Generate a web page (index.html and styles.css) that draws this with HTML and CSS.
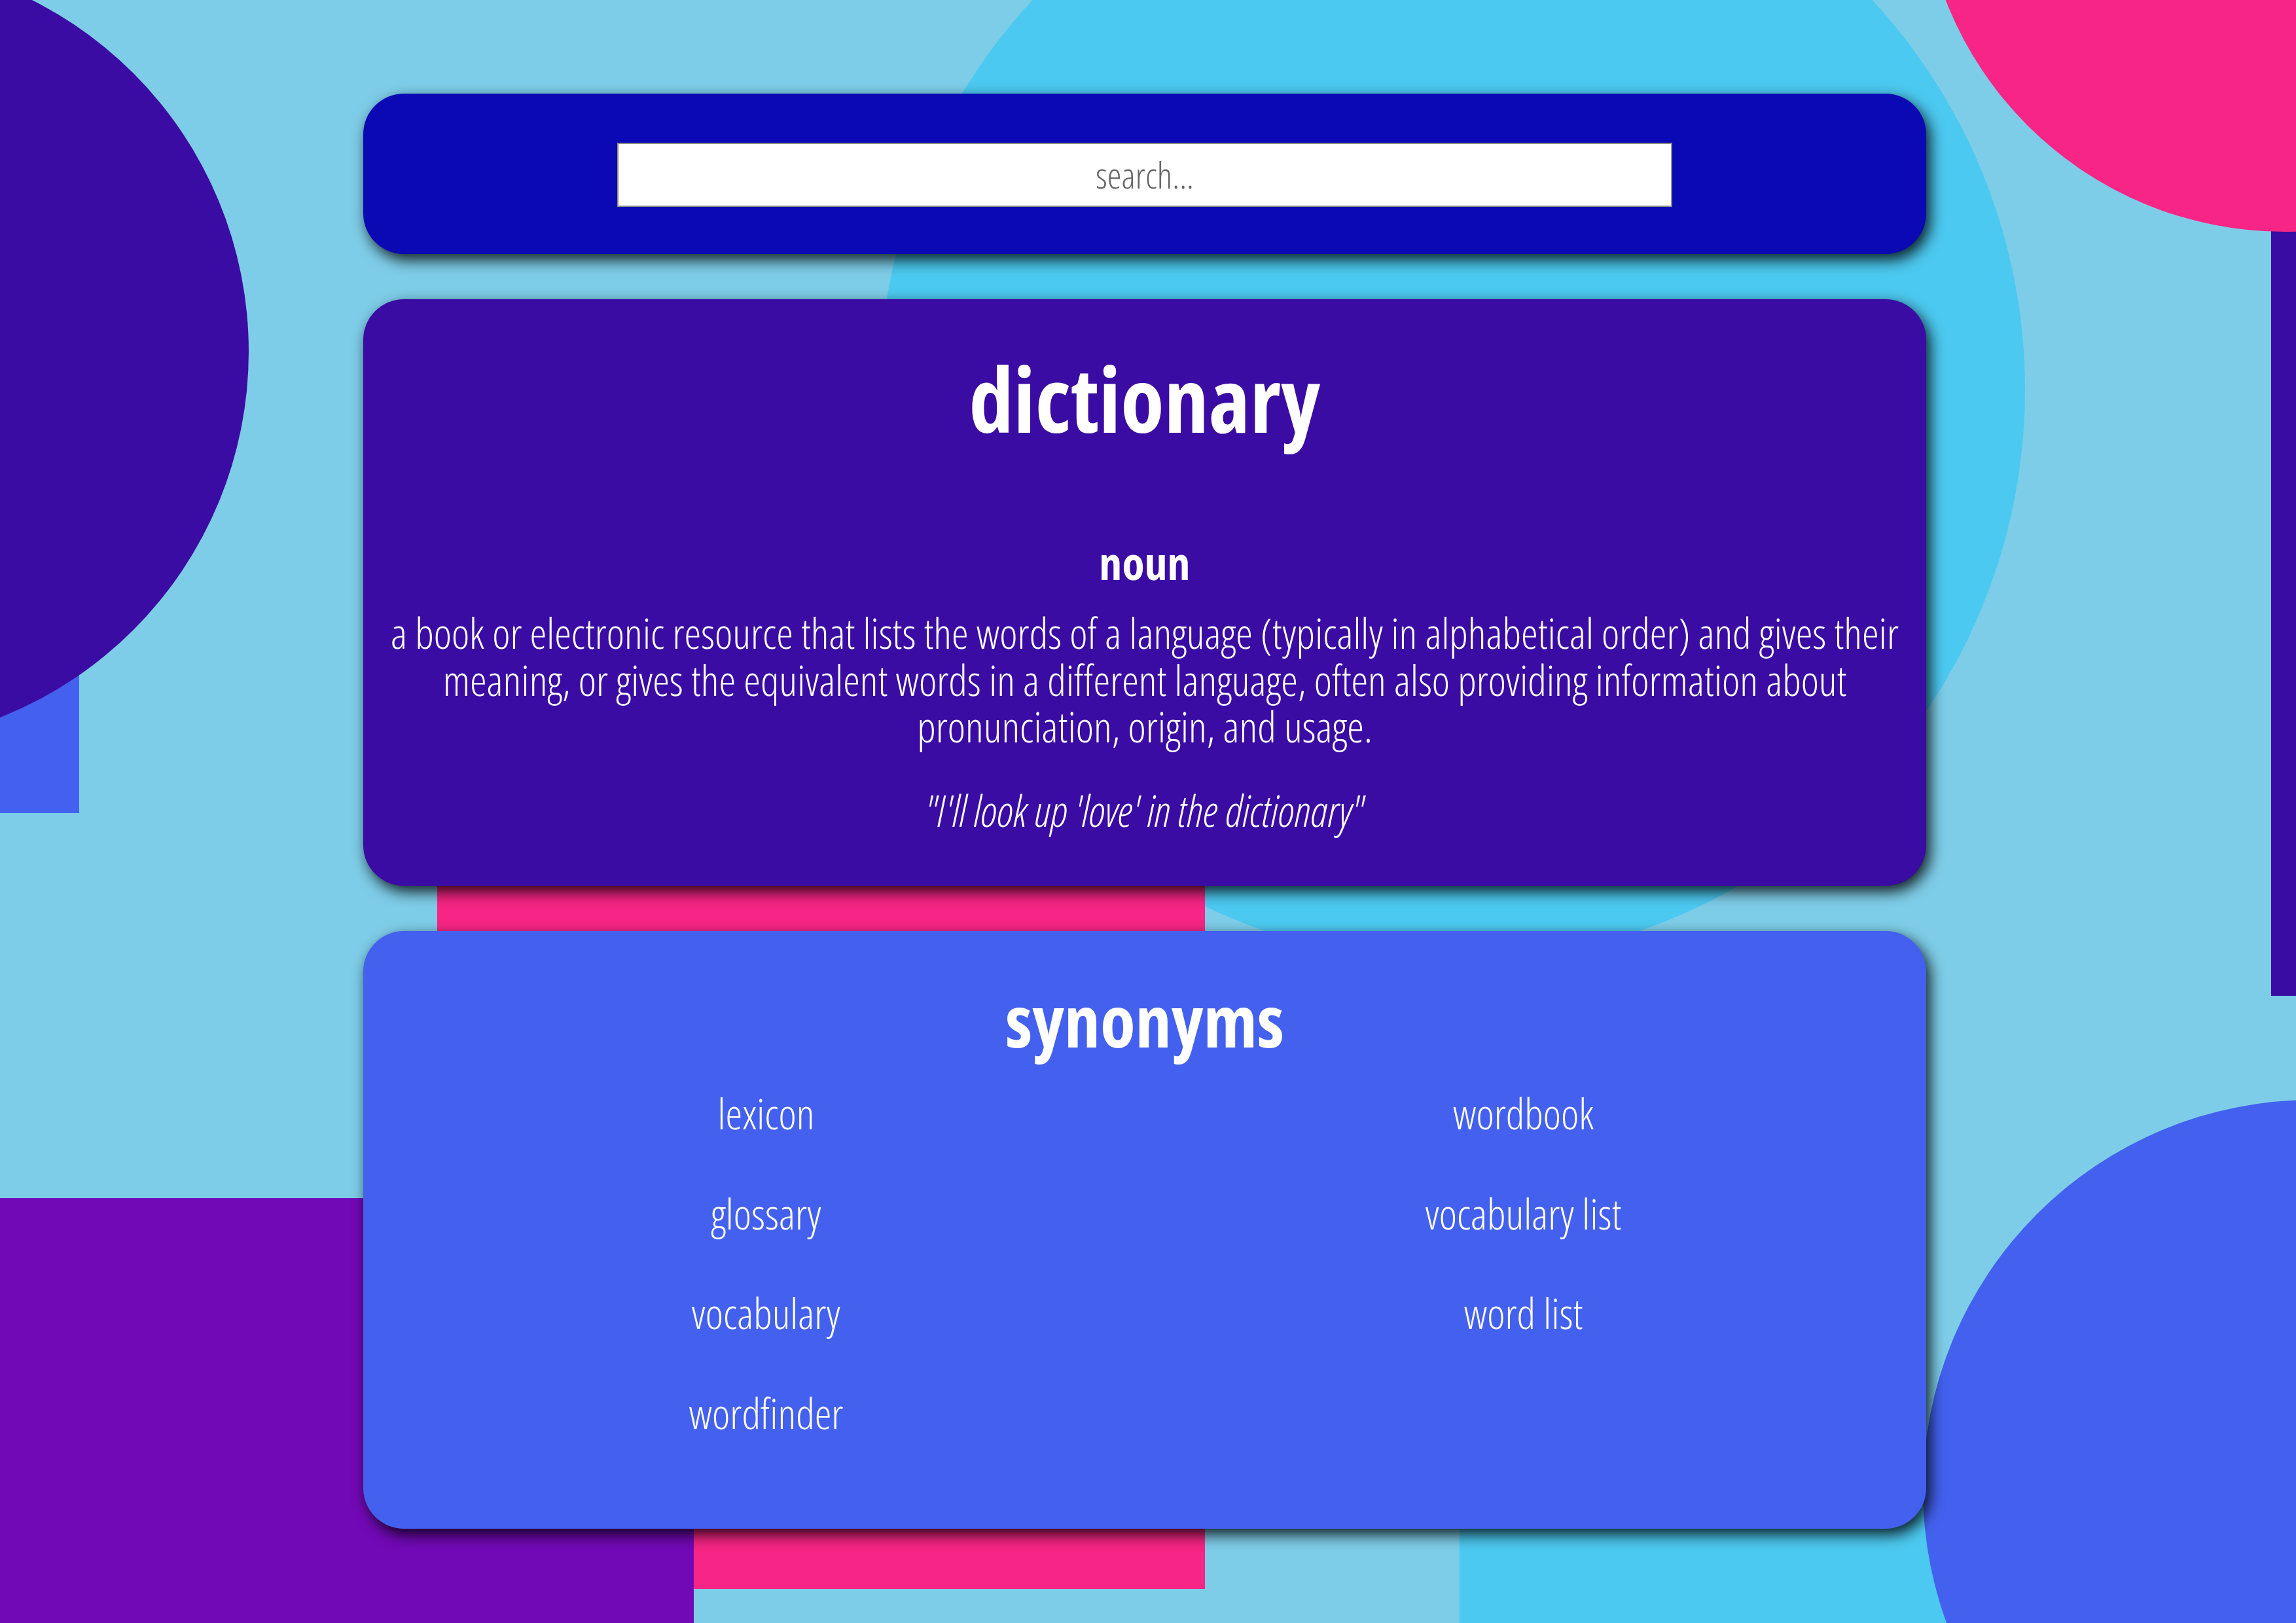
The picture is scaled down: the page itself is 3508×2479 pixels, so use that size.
FILE: index.html
```html
<!DOCTYPE html>
<html lang="en">
<head>
<meta charset="utf-8">
<title>dictionary</title>
<link rel="stylesheet" href="styles.css">
</head>
<body>
<div class="backdrop" aria-hidden="true">
  <div class="shape rect-left"></div>
  <div class="shape circle-left"></div>
  <div class="shape circle-cyan"></div>
  <div class="shape rect-right"></div>
  <div class="shape circle-pink"></div>
  <div class="shape rect-pink"></div>
  <div class="shape rect-purple"></div>
  <div class="shape rect-cyan"></div>
  <div class="shape circle-blue"></div>
</div>

<main class="page">
  <header class="card search-card">
    <input class="search-input" type="text" placeholder="search...">
  </header>

  <section class="card def-card">
    <h1 class="word">dictionary</h1>
    <h3 class="pos">noun</h3>
    <p class="definition">a book or electronic resource that lists the words of a language (typically in alphabetical order) and gives their meaning, or gives the equivalent words in a different language, often also providing information about pronunciation, origin, and usage.</p>
    <p class="example">"I'll look up 'love' in the dictionary"</p>
  </section>

  <section class="card syn-card">
    <h2 class="syn-title">synonyms</h2>
    <ul class="syn-list">
      <li>lexicon</li>
      <li>wordbook</li>
      <li>glossary</li>
      <li>vocabulary list</li>
      <li>vocabulary</li>
      <li>word list</li>
      <li>wordfinder</li>
    </ul>
  </section>
</main>
</body>
</html>
```
FILE: styles.css
```css
html, body {
  margin: 0;
  padding: 0;
}

body {
  width: 3508px;
  height: 2479px;
  overflow: hidden;
  background: #7ecde8;
  color: #ffffff;
  font-family: "Open Sans", sans-serif;
  font-stretch: 75%;
  font-weight: 340;
  position: relative;
}

/* ---------- decorative background ---------- */
.backdrop {
  position: absolute;
  inset: 0;
  overflow: hidden;
  z-index: 0;
}

.shape {
  position: absolute;
}

.rect-left {
  left: 0;
  top: 600px;
  width: 121px;
  height: 642px;
  background: #4361ee;
}

.circle-left {
  left: -822px;
  top: -64px;
  width: 1202px;
  height: 1202px;
  border-radius: 50%;
  background: #3a0ca3;
}

.circle-cyan {
  left: 1344px;
  top: -280px;
  width: 1750px;
  height: 1750px;
  border-radius: 50%;
  background: #4cc9f0;
}

.rect-right {
  left: 3470px;
  top: 200px;
  width: 100px;
  height: 1321px;
  background: #3a0ca3;
}

.circle-pink {
  left: 2935px;
  top: -756px;
  width: 1110px;
  height: 1110px;
  border-radius: 50%;
  background: #f72585;
}

.rect-pink {
  left: 668px;
  top: 1200px;
  width: 1173px;
  height: 1227px;
  background: #f72585;
}

.rect-purple {
  left: 0;
  top: 1830px;
  width: 1060px;
  height: 700px;
  background: #7209b7;
}

.rect-cyan {
  left: 2230px;
  top: 2250px;
  width: 1300px;
  height: 300px;
  background: #4cc9f0;
}

.circle-blue {
  left: 2938px;
  top: 1680px;
  width: 1190px;
  height: 1190px;
  border-radius: 50%;
  background: #4361ee;
}

/* ---------- content ---------- */
.page {
  position: relative;
  z-index: 1;
  width: 2388px;
  margin-left: 555px;
  padding-top: 143px;
  display: flex;
  flex-direction: column;
  gap: 69px;
}

.card {
  border-radius: 62px;
  box-shadow: 6px 9px 22px rgba(0, 0, 0, 0.85);
  box-sizing: border-box;
  text-align: center;
}

.search-card {
  height: 245px;
  background: #0b09b4;
  display: flex;
  justify-content: center;
  align-items: center;
}

.search-input {
  width: 1612px;
  height: 98px;
  box-sizing: border-box;
  border: 2px solid #8d8d86;
  border-radius: 0;
  background: #ffffff;
  text-align: center;
  font-family: inherit;
  font-stretch: 75%;
  font-weight: 300;
  font-size: 55px;
  color: #333;
  padding: 0;
  margin-top: 2px;
}

.search-input::placeholder {
  color: #666666;
}

.def-card {
  background: #3a0ca3;
  height: 896px;
  padding: 72px 30px 0;
}

.word {
  margin: 0;
  font-size: 136px;
  line-height: 160px;
  font-weight: 700;
}

.pos {
  margin: 125px 0 0;
  font-size: 70px;
  line-height: 90px;
  font-weight: 700;
}

.definition {
  margin: 27px 0 0;
  font-size: 65px;
  line-height: 71.5px;
}

.example {
  margin: 56px 0 0;
  font-size: 66px;
  line-height: 71.5px;
  font-style: italic;
}

.syn-card {
  background: #4361ee;
  height: 913px;
  padding: 70px 37px 0;
}

.syn-title {
  margin: 0;
  font-size: 110px;
  line-height: 130px;
  font-weight: 700;
}

.syn-list {
  list-style: none;
  margin: 42px 0 0;
  padding: 0;
  display: grid;
  grid-template-columns: 1fr 1fr;
  row-gap: 80.7px;
}

.syn-list li {
  font-size: 65px;
  line-height: 72px;
}
```
